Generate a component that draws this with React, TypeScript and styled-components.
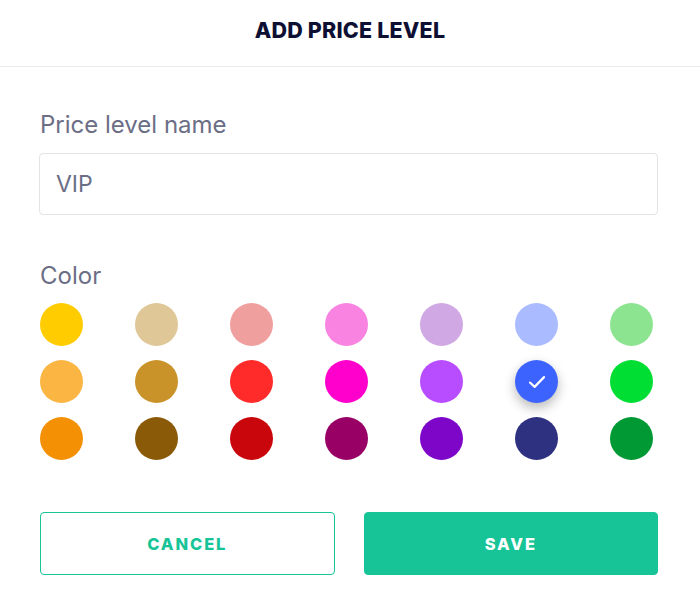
import React, { FC } from "react";
import styled, { createGlobalStyle } from "styled-components";

const GlobalStyle = createGlobalStyle`
  html, body {
    margin: 0;
    padding: 0;
    background: #ffffff;
  }
  * {
    box-sizing: border-box;
  }
`;

const fontStack = `Inter, "Noto Sans", "Liberation Sans", sans-serif`;

const COLORS: string[][] = [
  ["#FFCC00", "#DFC797", "#F09F9F", "#F883E0", "#D0A8E3", "#AABBFF", "#8CE491"],
  ["#FAB542", "#C9932A", "#FF2A2A", "#FF00CC", "#B84DFF", "#3D63FF", "#00DD33"],
  ["#F39004", "#8A5A08", "#C9060C", "#990066", "#7D06C9", "#2E3080", "#009933"],
];

const Modal = styled.div`
  width: 700px;
  height: 614px;
  background: #ffffff;
  font-family: ${fontStack};
`;

const Header = styled.div`
  height: 67px;
  display: flex;
  align-items: center;
  justify-content: center;
  border-bottom: 1px solid #ebebed;
  padding-bottom: 6px;

  h1 {
    margin: 0;
    font-size: 21.5px;
    font-weight: 800;
    color: #0d0f33;
    letter-spacing: 0.2px;
  }
`;

const Body = styled.div`
  padding: 41px 42px 0 39px;
`;

const Label = styled.label<{ $top?: number }>`
  display: block;
  font-size: 24px;
  line-height: 33px;
  font-weight: 400;
  color: #6b6e85;
  margin-top: ${({ $top }) => $top ?? 0}px;
  padding-left: 1px;
`;

const TextInput = styled.input`
  display: block;
  width: 100%;
  height: 62px;
  margin-top: 12px;
  padding: 0 16px;
  border: 1px solid #e2e3e6;
  border-radius: 4px;
  font-family: ${fontStack};
  font-size: 23px;
  color: #6b6e85;
  outline: none;
`;

const Swatches = styled.div`
  display: grid;
  grid-template-columns: repeat(7, 43px);
  column-gap: 52px;
  row-gap: 14px;
  margin-top: 11px;
  padding-left: 1px;
`;

const Swatch = styled.button<{ $color: string; $selected?: boolean }>`
  width: 43px;
  height: 43px;
  padding: 0;
  border: none;
  border-radius: 50%;
  background: ${({ $color }) => $color};
  display: flex;
  align-items: center;
  justify-content: center;
  cursor: pointer;
  box-shadow: ${({ $selected }) =>
    $selected ? "0 5px 12px rgba(0, 0, 0, 0.28)" : "none"};
`;

const Actions = styled.div`
  display: grid;
  grid-template-columns: 1fr 1fr;
  column-gap: 29px;
  margin-top: 52px;
  padding-left: 1px;
`;

const Button = styled.button<{ $primary?: boolean }>`
  height: 63px;
  border-radius: 4px;
  border: 1px solid #17c497;
  background: ${({ $primary }) => ($primary ? "#17c497" : "#ffffff")};
  color: ${({ $primary }) => ($primary ? "#ffffff" : "#17c497")};
  font-family: ${fontStack};
  font-size: 16.5px;
  font-weight: 800;
  letter-spacing: 1.9px;
  cursor: pointer;
`;

const CheckIcon: FC = () => (
  <svg width="26" height="26" viewBox="0 0 24 24" fill="none">
    <polyline
      points="5.5,12.5 9.8,16.5 18.5,7.5"
      stroke="#ffffff"
      strokeWidth="2"
      strokeLinecap="round"
      strokeLinejoin="round"
    />
  </svg>
);

const App: FC = () => {
  const selected = "#3D63FF";
  return (
    <Modal>
      <GlobalStyle />
      <Header>
        <h1>ADD PRICE LEVEL</h1>
      </Header>
      <Body>
        <Label>Price level name</Label>
        <TextInput defaultValue="VIP" />
        <Label $top={44}>Color</Label>
        <Swatches>
          {COLORS.flat().map((c) => (
            <Swatch key={c} $color={c} $selected={c === selected}>
              {c === selected ? <CheckIcon /> : null}
            </Swatch>
          ))}
        </Swatches>
        <Actions>
          <Button>CANCEL</Button>
          <Button $primary>SAVE</Button>
        </Actions>
      </Body>
    </Modal>
  );
};

export default App;
